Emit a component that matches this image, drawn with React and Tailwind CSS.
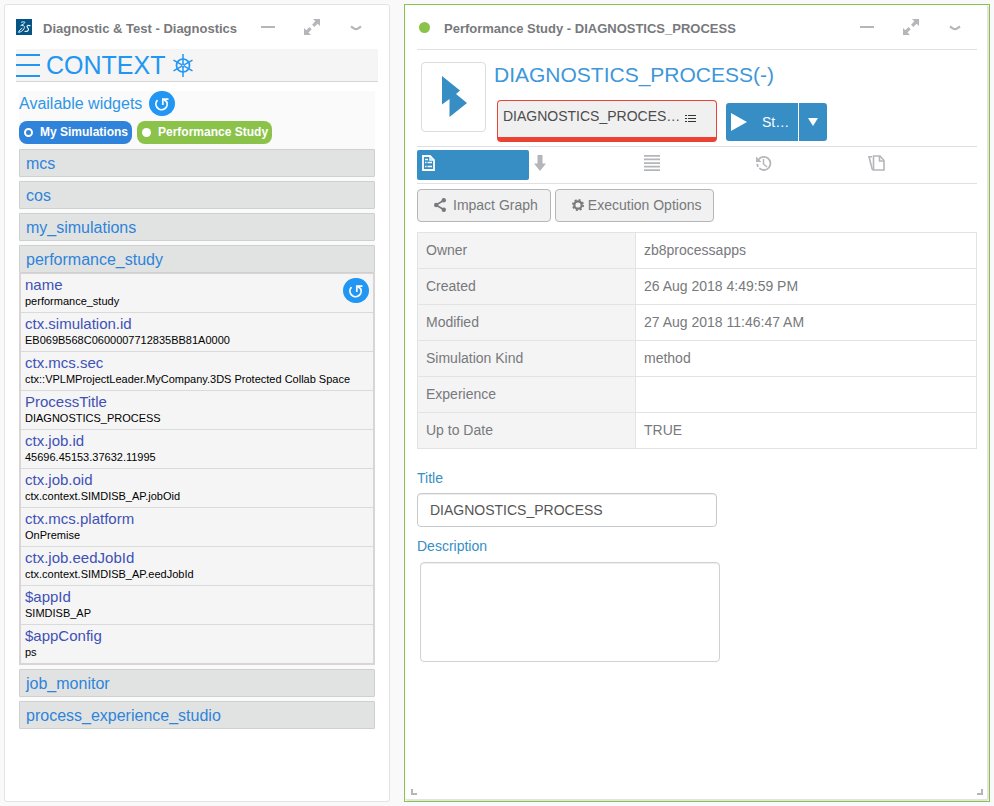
const studyFields = [
  ["name", "performance_study"],
  ["ctx.simulation.id", "EB069B568C0600007712835BB81A0000"],
  ["ctx.mcs.sec", "ctx::VPLMProjectLeader.MyCompany.3DS Protected Collab Space"],
  ["ProcessTitle", "DIAGNOSTICS_PROCESS"],
  ["ctx.job.id", "45696.45153.37632.11995"],
  ["ctx.job.oid", "ctx.context.SIMDISB_AP.jobOid"],
  ["ctx.mcs.platform", "OnPremise"],
  ["ctx.job.eedJobId", "ctx.context.SIMDISB_AP.eedJobId"],
  ["$appId", "SIMDISB_AP"],
  ["$appConfig", "ps"],
];

const properties = [
  ["Owner", "zb8processapps"],
  ["Created", "26 Aug 2018 4:49:59 PM"],
  ["Modified", "27 Aug 2018 11:46:47 AM"],
  ["Simulation Kind", "method"],
  ["Experience", ""],
  ["Up to Date", "TRUE"],
];

function PanelHeader({ icon, title }) {
  return (
    <header className="flex items-center border-b border-[#dfe0e1]">
      {icon}
      <h2 className="flex-1 truncate pt-[3px] text-[13px] leading-5 font-bold text-[#77797c]">{title}</h2>
      <div className="flex items-center gap-5 pt-[11px] pr-2.5 pb-[9px] text-[#b4b6ba]">
        <button aria-label="Minimize" className="flex size-6 items-center justify-center">
          <svg width="14" height="16" viewBox="0 0 14 16"><path d="M0 6h14v2H0z" fill="currentColor" /></svg>
        </button>
        <button aria-label="Maximize" className="flex size-6 items-center justify-center">
          <svg width="18" height="18" viewBox="0 0 18 18" fill="currentColor">
            <path d="M10 0h7v7l-2.300-2.300-3.400 3.200-2.200-2.200L12.300 2.300zM1 16V9l2.300 2.300 3.200-3.200 2.200 2.200-3.200 3.200L8 16z" />
          </svg>
        </button>
        <button aria-label="Panel menu" className="flex size-6 items-center justify-center">
          <svg width="12" height="8" viewBox="0 0 12 8" fill="none" stroke="currentColor" strokeWidth="2.200">
            <path d="M1 2.500 4.200 4.600Q6 5.600 7.800 4.600L11 2.500" />
          </svg>
        </button>
      </div>
    </header>
  );
}

function DassaultLogo() {
  return (
    <svg className="mr-[11px] shrink-0" width="16" height="16" viewBox="0 0 16 16">
      <path d="M0 0h16v16H0z" fill="#045585" />
      <g fill="none" stroke="#fff" strokeLinecap="round" strokeLinejoin="round">
        <path d="M5.500 3.200C7 2.600 9.200 2.700 8.800 3.600 8.400 4.700 6.600 5.600 4.800 6.600" strokeWidth="0.900" />
        <path d="M6.200 6.300C8.500 6.600 9 7.900 8 9.700 6.800 11.900 4.800 13.100 2.500 13.300 3.200 11.600 4.500 10.200 6 9.300" strokeWidth="0.900" />
        <path d="M14 6.700C12.700 6 10.900 6.400 11 7.500 11.100 8.700 12.800 9.100 12.500 10.600 12.200 12 10.400 12.600 8.900 12.300" strokeWidth="1.100" />
      </g>
    </svg>
  );
}

function HelmIcon() {
  return (
    <svg width="20" height="23" viewBox="0 0 20 23" fill="none" stroke="currentColor">
      <circle cx="10" cy="11.500" r="6.500" strokeWidth="1.700" />
      <circle cx="10" cy="11.500" r="1.400" strokeWidth="1.200" />
      <path d="M10 0v10M10 13v10M.5 6.200l8 4.500M11.500 12.300l8 4.500M19.500 6.200l-8 4.500M8.500 12.300l-8 4.500" strokeWidth="1.500" />
    </svg>
  );
}

function RefreshButton({ label }) {
  return (
    <button aria-label={label} className="flex h-[25px] w-[26px] shrink-0 items-center justify-center rounded-full bg-[#2196f3] text-white">
      <svg width="16" height="16" viewBox="0 0 16 16" fill="none" stroke="currentColor">
        <path d="M3.500 4.200A5.600 5.600 0 1 0 12.500 5.500L10 3.800" strokeWidth="1.800" />
        <path d="M14.500 3.200H8.800V9" strokeWidth="1.700" />
      </svg>
    </button>
  );
}

function Section({ name, children }) {
  return (
    <section>
      <button className="flex h-7 w-full items-center rounded-[1px] border border-[#cfd1d1] bg-[#e1e3e2] px-1.5 pt-0.5 text-left text-base text-[#2f83da]">
        {name}
      </button>
      {children}
    </section>
  );
}

function ContextPanel() {
  return (
    <section className="flex flex-col rounded-[3px] border border-[#e2e4e3] bg-white px-[11px]">
      <div className="-mb-px">
        <PanelHeader icon={<DassaultLogo />} title="Diagnostic & Test - Diagnostics" />
      </div>
      <div className="flex h-[33px] items-center border-b border-[#d5d6d8] bg-[#f5f5f5] text-[#2196f3]">
        <button aria-label="Menu" className="mr-1.5">
          <svg className="block" width="24" height="23" viewBox="0 0 24 23">
            <path d="M0 0h24v2H0zM0 10h24v2H0zM0 21h24v2H0z" fill="currentColor" />
          </svg>
        </button>
        <h1 className="mr-2 text-[25px] leading-8">CONTEXT</h1>
        <HelmIcon />
      </div>
      <div className="mt-[9px] mr-[3px] ml-[3px] bg-[#fafafa]">
        <div className="flex items-center gap-[7px] text-base leading-6 text-[#2f96e6]">
          <span>Available widgets</span>
          <RefreshButton label="Refresh widgets" />
        </div>
        <div className="flex gap-[5px] pt-[5px] pb-[5px] text-xs leading-[23px] font-bold text-white">
          <button className="flex items-center gap-[7px] rounded-[8px] bg-[#2f83da] px-[5px] pr-1">
            <span className="size-[9px] rounded-full border-2 border-white" />
            <span className="leading-[23px]">My Simulations</span>
          </button>
          <button className="flex items-center gap-[7px] rounded-[8px] bg-[#8bc34a] px-[5px] pr-1">
            <span className="size-[9px] rounded-full bg-white" />
            <span className="leading-[23px]">Performance Study</span>
          </button>
        </div>
        <div className="flex flex-col gap-1">
          <Section name="mcs" />
          <Section name="cos" />
          <Section name="my_simulations" />
          <Section name="performance_study">
            <dl className="border border-t border-r-2 border-b-2 border-l-2 border-[#d9d5d7] bg-[#f5f5f5]">
              {studyFields.map(([key, value], i) => (
                <div key={key} className="flex h-[39px] items-start justify-between border-b border-[#d9dadb] px-1 pt-0.5 last:h-[38px] last:border-b-0">
                  <div>
                    <dt className="text-[15px] leading-[18px] text-[#3f51b5]">{key}</dt>
                    <dd className="text-[11px] leading-[14px] text-black">{value}</dd>
                  </div>
                  {i === 0 && (
                    <div className="pt-0.5">
                      <RefreshButton label="Refresh study" />
                    </div>
                  )}
                </div>
              ))}
            </dl>
          </Section>
          <Section name="job_monitor" />
          <Section name="process_experience_studio" />
        </div>
      </div>
    </section>
  );
}

function DocumentIcon() {
  return (
    <svg width="13" height="16" viewBox="0 0 13 16" fill="none" stroke="currentColor">
      <path d="M1 1h7l4 4v10H1z" strokeWidth="1.800" />
      <path d="M8 1v4h4M3 7.500h1.500M5.500 7.500H10M3 11.500h1.500M5.500 11.500H10M3 4.500h3" strokeWidth="1.400" />
    </svg>
  );
}

function DownIcon() {
  return (
    <svg width="12" height="16" viewBox="0 0 12 16">
      <path d="M3.500 0h5v8.500H12L6 16 0 8.500h3.500z" fill="currentColor" />
    </svg>
  );
}

function LinesIcon() {
  return (
    <svg width="16" height="16" viewBox="0 0 16 16">
      <path d="M0 0h16v1.700H0zM0 3.600h16v1.700H0zM0 7.200h16v1.700H0zM0 10.800h16v1.700H0zM0 14.300h16V16H0z" fill="currentColor" />
    </svg>
  );
}

function HistoryIcon() {
  return (
    <svg width="16" height="16" viewBox="0 0 16 16" fill="none" stroke="currentColor" strokeWidth="1.800">
      <path d="M2.500 4.500A6.600 6.600 0 1 1 3.300 13.200" />
      <path d="M0 1.500V7h5.500z" fill="currentColor" stroke="none" />
      <path d="M7.500 4v5l3.500 3" strokeWidth="1.500" />
      <path d="M1.200 8.800c.1 1 .4 2 .9 2.900" />
    </svg>
  );
}

function PagesIcon() {
  return (
    <svg className="shrink-0" width="17" height="16" viewBox="0 0 17 16" fill="none" stroke="currentColor" strokeWidth="1.600">
      <path d="M5.500 1H12l4 4.500V15H5.500z" />
      <path d="M11.500 1v5H16M5.500 14.800l-1.300-.6L1 1.800h3" />
    </svg>
  );
}

const tabs = [
  ["Properties", DocumentIcon],
  ["Download", DownIcon],
  ["Parameters", LinesIcon],
  ["History", HistoryIcon],
  ["Documents", PagesIcon],
];

function StudyPanel() {
  return (
    <section className="border border-[#8bc34a] bg-white">
      <div className="relative h-full rounded-[3px] border-r-2 border-b-2 border-[#e2e4e3] pr-2.5 pl-3">
        <PanelHeader
          icon={<span className="mr-3.5 ml-0.5 size-[11px] rounded-full bg-[#8bc34a]" />}
          title="Performance Study - DIAGNOSTICS_PROCESS"
        />
        <div className="flex gap-2 border-b border-[#dfe0e1] pt-3 pb-1 pl-1">
          <div className="flex h-[70px] w-[65px] shrink-0 items-center justify-center rounded-[4px] border border-[#dbdcdd]">
            <svg width="26" height="42" viewBox="0 0 26 42">
              <path d="M1 0 19 14.500 15 18 26 27 8.500 41V23L1 28.500z" fill="#368ec4" />
            </svg>
          </div>
          <div>
            <h1 className="text-[21px] leading-[26px] text-[#3d97da]">DIAGNOSTICS_PROCESS(-)</h1>
            <div className="mt-3 ml-[3px] flex items-end gap-[9px]">
              <button className="flex h-[42px] w-[220px] items-start justify-between rounded-[4px] border border-b-5 border-[#ea4335] bg-[#f0f0f0] pt-[5px] pr-5 pl-[5px] text-sm text-[#4c4c4c]">
                DIAGNOSTICS_PROCES…
                <svg className="mt-2" width="11" height="9" viewBox="0 0 11 9">
                  <path d="M0 1h2v1H0zM0 4h2v1H0zM0 7h2v1H0zM3 1h8v1H3zM3 4h8v1H3zM3 7h8v1H3z" fill="#333" />
                </svg>
              </button>
              <div className="flex gap-px pb-px text-sm text-white">
                <button className="flex h-[38px] w-[72px] items-center gap-[15px] rounded-l-[3px] bg-[#368ec4] pl-[5px]">
                  <svg className="shrink-0" width="16" height="18" viewBox="0 0 16 18"><path d="M0 0 16 9 0 18z" fill="currentColor" /></svg>
                  St…
                </button>
                <button aria-label="More start options" className="flex h-[38px] w-7 items-center justify-center rounded-r-[3px] bg-[#368ec4]">
                  <svg width="10" height="8" viewBox="0 0 10 8"><path d="M0 0h10L5 8z" fill="currentColor" /></svg>
                </button>
              </div>
            </div>
          </div>
        </div>
        <nav className="grid grid-cols-5 border-b border-[#dfe0e1] py-[3px]">
          {tabs.map(([label, Icon], i) => (
            <button
              key={label}
              aria-label={label}
              className={
                i === 0
                  ? "flex h-[30px] items-start rounded-[2px] bg-[#368ec4] px-[3px] pt-[5px] text-white"
                  : "flex h-[30px] items-start px-[3px] pt-[5px] text-[#b4b6ba]"
              }
            >
              <span className="flex w-4 justify-center">
                <Icon />
              </span>
            </button>
          ))}
        </nav>
        <div className="flex gap-1 pt-[5px] pb-2.5 text-sm text-[#77797c]">
          <button className="flex h-[33px] items-center gap-[7px] rounded-[4px] border border-[#b4b6ba] bg-[#f1f1f1] pr-3 pb-0.5 pl-4">
            <svg width="12" height="14" viewBox="0 0 12 14" fill="currentColor">
              <path d="m2 7 8-4.700M2 7l8 4.700" stroke="currentColor" strokeWidth="1.600" />
              <circle cx="2.200" cy="7" r="2.200" /><circle cx="9.800" cy="2.300" r="2.200" /><circle cx="9.800" cy="11.700" r="2.200" />
            </svg>
            Impact Graph
          </button>
          <button className="flex h-[33px] items-center gap-1 rounded-[4px] border border-[#b4b6ba] bg-[#f1f1f1] pr-3 pb-0.5 pl-4">
            <svg width="12" height="12" viewBox="0 0 12 12" fill="none" stroke="currentColor">
              <circle cx="6" cy="6" r="3.700" strokeWidth="2.200" />
              <circle cx="6" cy="6" r="5.200" strokeWidth="1.600" strokeDasharray="2.040 2.040" />
            </svg>
            Execution Options
          </button>
        </div>
        <table className="w-full border-collapse text-sm text-[#77797c]">
          <tbody>
            {properties.map(([label, value]) => (
              <tr key={label} className="h-9">
                <th scope="row" className="w-[39%] border border-[#e2e4e3] bg-[#f4f4f5] px-2 pb-0.5 text-left font-normal">{label}</th>
                <td className="border border-[#e2e4e3] px-2 pb-0.5">{value}</td>
              </tr>
            ))}
          </tbody>
        </table>
        <form className="flex flex-col items-start text-sm">
          <label htmlFor="title" className="mt-[19px] text-[#368ec4]">Title</label>
          <input
            id="title"
            defaultValue="DIAGNOSTICS_PROCESS"
            className="mt-[5px] h-[34px] w-[300px] rounded-[4px] border border-[#c8c9cb] px-3 text-[#555] shadow-[inset_0_1px_1px_rgba(0,0,0,0.075)]"
          />
          <label htmlFor="description" className="mt-[9px] text-[#368ec4]">Description</label>
          <textarea
            id="description"
            className="mt-1.5 ml-[3px] h-[100px] w-[300px] resize-none rounded-[4px] border border-[#cfd1d2] px-3 py-1.5 text-[#555] shadow-[inset_0_1px_1px_rgba(0,0,0,0.075)]"
          />
        </form>
        <span className="absolute bottom-1 left-1.5 size-1.5 border-b-2 border-l-2 border-[#b4b6ba]" />
        <span className="absolute right-1 bottom-1 size-1.5 border-r-2 border-b-2 border-[#b4b6ba]" />
      </div>
    </section>
  );
}

export default function App() {
  return (
    <main className="grid min-h-screen grid-cols-[386fr_586fr] gap-3.5 bg-[#f9f9f9] p-1 font-['Liberation_Sans',Arial,sans-serif]">
      <ContextPanel />
      <StudyPanel />
    </main>
  );
}
